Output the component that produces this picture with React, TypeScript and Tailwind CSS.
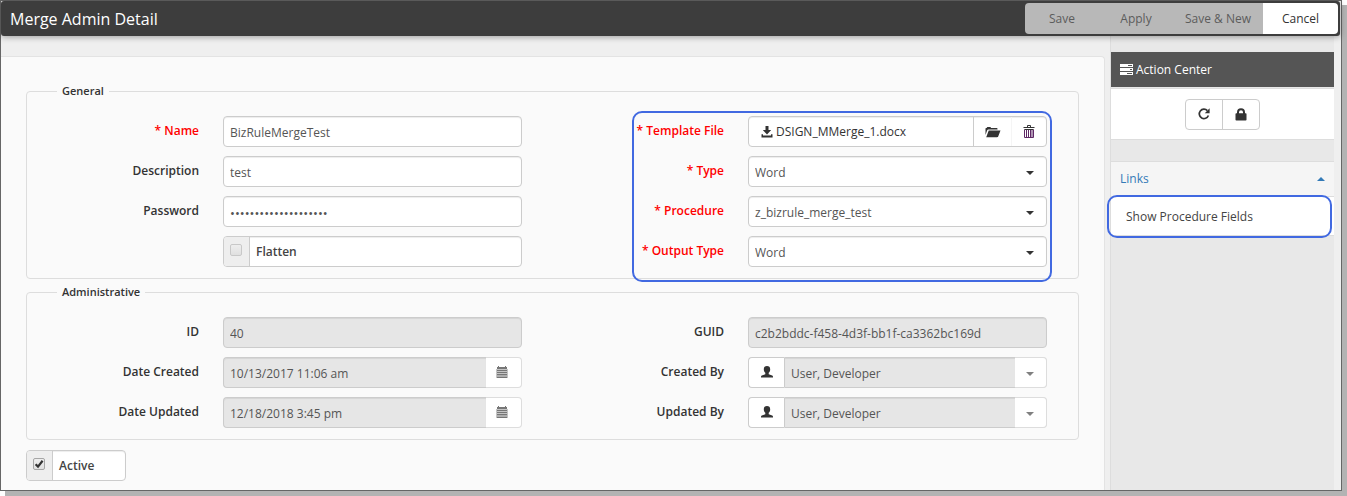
import type { ReactNode } from "react";

const boxClass =
  "flex h-[31px] w-full overflow-hidden rounded-[4px] border border-[#ccc] bg-white text-[#555] shadow-[inset_0_1px_1px_rgba(0,0,0,0.075)]";
const inputClass =
  "h-[31px] w-full rounded-[4px] border border-[#ccc] bg-white px-1.5 pt-0.5 text-[#555] shadow-[inset_0_1px_1px_rgba(0,0,0,0.075)] outline-none disabled:bg-[#e6e6e6]";

function TasksIcon() {
  return (
    <svg width="13" height="12" viewBox="0 0 13 12" fill="currentColor" aria-hidden="true" className="shrink-0">
      <path fillRule="evenodd" d="M0 0H13V3H0ZM8 1V2H12V1Z" />
      <path fillRule="evenodd" d="M0 4H13V7H0ZM10 5V6H12V5Z" />
      <path fillRule="evenodd" d="M0 8H13V11H0ZM7 9V10H12V9Z" />
    </svg>
  );
}

function RefreshIcon() {
  return (
    <svg width="12" height="12" viewBox="0 0 12 12" aria-hidden="true">
      <path d="M9.4 2.6A4.7 4.7 0 1 0 10.4 7.5" fill="none" stroke="currentColor" strokeWidth="1.7" />
      <path d="M11.6 0.2V5.2H6.8Z" fill="currentColor" />
    </svg>
  );
}

function LockIcon() {
  return (
    <svg width="12" height="13" viewBox="0 0 12 13" aria-hidden="true">
      <path d="M3 6V4.2A3 3 0 0 1 9 4.2V6" fill="none" stroke="currentColor" strokeWidth="2" />
      <rect x="0.5" y="5.3" width="11" height="7.2" rx="0.8" fill="currentColor" />
    </svg>
  );
}

function DownloadIcon() {
  return (
    <svg width="12" height="12" viewBox="0 0 12 12" fill="currentColor" aria-hidden="true" className="shrink-0">
      <path d="M4.5 0H7.5V4H10.2L6 8.4L1.8 4H4.5Z" />
      <path d="M0.5 8.2H2V9.6H10V8.2H11.5V11.6H0.5Z" />
    </svg>
  );
}

function FolderIcon() {
  return (
    <svg width="16" height="12" viewBox="0 0 16 12" fill="currentColor" aria-hidden="true">
      <path d="M0.5 9V2.6Q0.5 2 1.1 2H1.6L2.3 0.9H5.4L6.1 2H11.8Q12.5 2 12.5 2.7V3.6H3.3Q2.4 3.6 2.1 4.4Z" />
      <path d="M3.7 4.5H15.5L13.2 10.5Q12.9 11.3 12 11.3H1.2Z" />
    </svg>
  );
}

function TrashIcon() {
  return (
    <svg width="12" height="14" viewBox="0 0 12 14" aria-hidden="true">
      <path d="M4.5 2.5V0.5H7.5V2.5" fill="none" stroke="#333" strokeWidth="1" />
      <path d="M0.5 2.5H11.5M1.5 4.5H10.5" stroke="#333" strokeWidth="1" />
      <path d="M1.5 4.5V12.5H10.5V4.5M3.5 5V12M5.5 5V12M7.5 5V12M9 5V12" fill="none" stroke="#5f2a66" strokeWidth="1" />
    </svg>
  );
}

function CalendarIcon() {
  return (
    <svg width="12" height="12" viewBox="0 0 12 12" aria-hidden="true">
      <rect x="0" y="3" width="12" height="9" fill="#c4c4c4" />
      <path d="M1 1H2V0H3V1H9V0H10V1H11V3H1Z" fill="#777" />
      <path d="M1 4.5H11M1 6.5H11M1 8.5H11M1 11.5H11" stroke="#777" strokeWidth="1" />
      <path d="M1 10H11" stroke="#999" strokeWidth="1" />
    </svg>
  );
}

function UserIcon() {
  return (
    <svg width="12" height="12" viewBox="0 0 12 12" fill="currentColor" aria-hidden="true">
      <path d="M6 0C8 0 9.2 1.2 9.2 3.2C9.2 4.9 8.5 6 7.7 6.8V8.2L11.2 9.6Q12 9.9 12 10.7V11.6H0V10.7Q0 9.9 0.8 9.6L4.3 8.2V6.8C3.5 6 2.8 4.9 2.8 3.2C2.8 1.2 4 0 6 0Z" />
    </svg>
  );
}

function Caret({ up = false }: { up?: boolean }) {
  return (
    <svg width="8" height="4" viewBox="0 0 8 4" fill="currentColor" aria-hidden="true">
      <path d={up ? "M0 4L4 0L8 4Z" : "M0 0H8L4 4Z"} />
    </svg>
  );
}

function Row({ id, label, required = false, children }: { id?: string; label?: string; required?: boolean; children: ReactNode }) {
  return (
    <div className="grid grid-cols-[172px_minmax(0,1fr)] gap-6 pr-[30px]">
      {label ? (
        <label htmlFor={id} className={`pt-1.5 text-right font-semibold leading-[18px] ${required ? "text-[#f00]" : "text-[#333]"}`}>
          {required ? "* " : ""}
          {label}
        </label>
      ) : (
        <span />
      )}
      {children}
    </div>
  );
}

function SelectBox({ id, value }: { id: string; value: string }) {
  return (
    <div className="relative">
      <select id={id} className={`${inputClass} appearance-none pr-8`}>
        <option>{value}</option>
      </select>
      <span className="pointer-events-none absolute inset-y-0 right-[13px] flex items-center pt-0.5 text-[#333]">
        <Caret />
      </span>
    </div>
  );
}

function DateBox({ id, value }: { id: string; value: string }) {
  return (
    <div className="flex h-[31px]">
      <input
        id={id}
        disabled
        defaultValue={value}
        className="min-w-0 flex-1 rounded-l-[4px] border border-r-0 border-[#ccc] bg-[#e6e6e6] px-1.5 pt-0.5 text-[#555] shadow-[inset_0_1px_1px_rgba(0,0,0,0.075)]"
      />
      <button disabled aria-label="Pick date" className="flex w-9 justify-center rounded-r-[4px] border border-l-0 border-[#ddd] bg-white pr-[3px] pt-2">
        <CalendarIcon />
      </button>
    </div>
  );
}

function UserBox({ id, value }: { id: string; value: string }) {
  return (
    <div className="flex h-[31px]">
      <button aria-label="Open user" className="flex w-9 justify-center rounded-l-[4px] border border-r-0 border-[#ccc] bg-white pt-2 text-[#333]">
        <UserIcon />
      </button>
      <div className="relative min-w-0 flex-1">
        <select
          id={id}
          disabled
          className="h-full w-full appearance-none rounded-r-[4px] border border-[#ccc] bg-[#e6e6e6] px-1.5 pt-0.5 text-[#555] opacity-100 shadow-[inset_0_1px_1px_rgba(0,0,0,0.075)]"
        >
          <option>{value}</option>
        </select>
        <span className="pointer-events-none absolute inset-y-0 right-0 flex w-8 items-center justify-end rounded-r-[4px] border border-l-0 border-[#ddd] bg-white pr-3 pt-0.5 text-[#808080]">
          <Caret />
        </span>
      </div>
    </div>
  );
}

function CheckBox({ id, label, checked = false, dim = false }: { id: string; label: string; checked?: boolean; dim?: boolean }) {
  return (
    <div className={boxClass}>
      <span className="flex w-[26px] shrink-0 border-r border-[#ccc] bg-[#eee] pl-1.5 pt-[7px]">
        <span className="relative h-3 w-3">
          <input
            id={id}
            type="checkbox"
            defaultChecked={checked}
            className={`block h-3 w-3 appearance-none rounded-[2px] border bg-linear-to-b from-[#eee] to-[#e0e0e0] ${dim ? "border-[#c8c8c8]" : "border-[#a6a6a6]"}`}
          />
          {checked && (
            <svg viewBox="0 0 12 12" className="pointer-events-none absolute inset-0 h-3 w-3" aria-hidden="true">
              <path d="M2.6 6.2L5 8.6L9.6 2.8" fill="none" stroke="#333" strokeWidth="2.2" />
            </svg>
          )}
        </span>
      </span>
      <label htmlFor={id} className="px-1.5 pt-1.5 font-semibold leading-[18px] text-[#444]">
        {label}
      </label>
    </div>
  );
}

function Group({ title, children }: { title: string; children: ReactNode }) {
  return (
    <fieldset className="rounded-[4px] border border-[#ddd] pb-[11px]">
      <legend className="ml-[30px] px-[5px] text-[11px] font-semibold leading-4 text-[#333]">{title}</legend>
      <div className="grid grid-cols-2 pr-px pt-[17px]">{children}</div>
    </fieldset>
  );
}

const actions = [
  { label: "Save", width: "w-[74px]", disabled: true },
  { label: "Apply", width: "w-[74px]", disabled: true },
  { label: "Save & New", width: "w-[90px]", disabled: true },
  { label: "Cancel", width: "w-[75px]", disabled: false },
];

export default function App() {
  return (
    <div className="flex min-h-screen bg-white pb-[5px] pr-[5px] font-['Open_Sans',sans-serif] text-xs">
      <div className="flex min-w-0 flex-1 flex-col border border-[#666] bg-[#efefef] shadow-[5px_5px_0_#b3b3b3]">
        <header className="relative z-10 mr-px flex h-[35px] items-center justify-between rounded-[3px] bg-[#3d3d3d] pl-[9px] pr-0.5 shadow-[0_1px_6px_rgba(0,0,0,0.35)]">
          <h1 className="text-base leading-6 text-white">Merge Admin Detail</h1>
          <div className="flex overflow-hidden rounded-[4px]">
            {actions.map((a) => (
              <button
                key={a.label}
                disabled={a.disabled}
                className={`h-[31px] ${a.width} ${a.disabled ? "bg-[#b8b8b8] text-[#5c5c5c]" : "bg-white text-[#333]"}`}
              >
                {a.label}
              </button>
            ))}
          </div>
        </header>

        <div className="flex flex-1">
          <main className="mt-5 min-w-0 flex-1 rounded-tr-[4px] border-r border-t border-[#e3e3e3] bg-[#fafafa] px-[25px] pt-[26px]">
            <Group title="General">
              <div className="flex flex-col gap-[9px]">
                <Row id="name" label="Name" required>
                  <input id="name" defaultValue="BizRuleMergeTest" className={inputClass} />
                </Row>
                <Row id="description" label="Description">
                  <input id="description" defaultValue="test" className={inputClass} />
                </Row>
                <Row id="password" label="Password">
                  <input id="password" type="password" defaultValue="12345678901234567890" className={`${inputClass} text-[13px]`} />
                </Row>
                <Row>
                  <CheckBox id="flatten" label="Flatten" dim />
                </Row>
              </div>
              <div className="relative flex flex-col gap-[9px]">
                <Row id="template" label="Template File" required>
                  <div className={boxClass}>
                    <a href="#template" className="flex min-w-0 flex-1 items-center gap-[3px] pl-3 text-[#333]">
                      <DownloadIcon />
                      DSIGN_MMerge_1.docx
                    </a>
                    <button id="template" aria-label="Browse" className="flex w-[38px] items-center justify-center border-l border-[#ccc] text-[#333]">
                      <FolderIcon />
                    </button>
                    <button aria-label="Remove file" className="flex w-[35px] items-center justify-center border-l border-[#f5f5f5]">
                      <TrashIcon />
                    </button>
                  </div>
                </Row>
                <Row id="type" label="Type" required>
                  <SelectBox id="type" value="Word" />
                </Row>
                <Row id="procedure" label="Procedure" required>
                  <SelectBox id="procedure" value="z_bizrule_merge_test" />
                </Row>
                <Row id="output" label="Output Type" required>
                  <SelectBox id="output" value="Word" />
                </Row>
                <div className="pointer-events-none absolute -bottom-[15px] -top-[5px] left-20 right-[25px] rounded-[10px] border-2 border-[#4169e1]" />
              </div>
            </Group>

            <div className="mt-[5px]">
              <Group title="Administrative">
                <div className="flex flex-col gap-[9px]">
                  <Row id="rid" label="ID">
                    <input id="rid" disabled defaultValue="40" className={inputClass} />
                  </Row>
                  <Row id="created" label="Date Created">
                    <DateBox id="created" value="10/13/2017 11:06 am" />
                  </Row>
                  <Row id="updated" label="Date Updated">
                    <DateBox id="updated" value="12/18/2018 3:45 pm" />
                  </Row>
                </div>
                <div className="flex flex-col gap-[9px]">
                  <Row id="guid" label="GUID">
                    <input id="guid" disabled defaultValue="c2b2bddc-f458-4d3f-bb1f-ca3362bc169d" className={inputClass} />
                  </Row>
                  <Row id="createdby" label="Created By">
                    <UserBox id="createdby" value="User, Developer" />
                  </Row>
                  <Row id="updatedby" label="Updated By">
                    <UserBox id="updatedby" value="User, Developer" />
                  </Row>
                </div>
              </Group>
            </div>

            <div className="mt-2.5 w-[100px]">
              <CheckBox id="active" label="Active" checked />
            </div>
          </main>

          <aside className="ml-[5px] mr-[7px] w-[224px] border-l border-[#ddd] bg-[#e8e8e8] pt-4">
            <h2 className="flex h-[35px] items-center gap-[3px] bg-[#555] px-[9px] text-white">
              <TasksIcon />
              Action Center
            </h2>
            <div className="mt-px flex h-[52px] items-center justify-center border-y border-[#ddd] bg-white">
              <div className="flex rounded-[4px] border border-[#ccc] text-[#333]">
                <button aria-label="Refresh" className="flex h-[29px] w-9 items-center justify-center">
                  <RefreshIcon />
                </button>
                <button aria-label="Lock" className="flex h-[29px] w-[37px] items-center justify-center border-l border-[#ccc]">
                  <LockIcon />
                </button>
              </div>
            </div>
            <button className="mt-[21px] flex h-9 w-full items-center justify-between border-y border-[#ddd] bg-[#f5f5f5] px-[9px] text-[#337ab7]">
              Links
              <Caret up />
            </button>
            <div className="relative h-[39px] border-b border-[#ddd] bg-white">
              <a href="#fields" className="flex h-full items-center px-[15px] pt-0.5 text-[#444]">
                Show Procedure Fields
              </a>
              <div className="pointer-events-none absolute -bottom-[3px] -left-1 -top-[2px] right-[2px] rounded-[10px] border-2 border-[#4169e1]" />
            </div>
          </aside>
        </div>
      </div>
    </div>
  );
}
